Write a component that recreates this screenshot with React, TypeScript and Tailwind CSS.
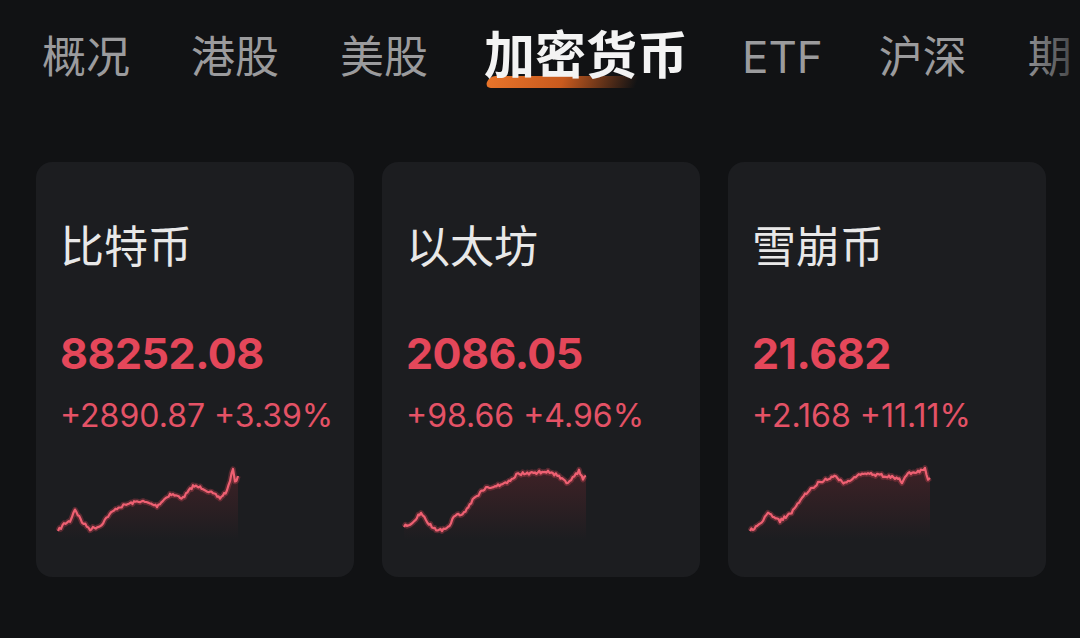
import React from "react";

const tabs = ["概况", "港股", "美股", "加密货币", "ETF", "沪深", "期"];

type Coin = {
  name: string;
  price: string;
  change: string;
  keys: [number, number][];
  seed: number;
};

const coins: Coin[] = [
  {
    name: "比特币",
    price: "88252.08",
    change: "+2890.87 +3.39%",
    seed: 7,
    keys: [
      [0, 65], [6, 58], [12, 55], [17, 43], [24, 56], [32, 63], [42, 60], [50, 50],
      [59, 42], [70, 38], [82, 35], [90, 37], [99, 40], [112, 28], [125, 32], [135, 20],
      [145, 22], [155, 28], [162, 32], [169, 25], [175, 3], [177, 17], [180, 10],
    ],
  },
  {
    name: "以太坊",
    price: "2086.05",
    change: "+98.66 +4.96%",
    seed: 13,
    keys: [
      [0, 61], [10, 55], [17, 46], [25, 58], [35, 65], [44, 62], [50, 50], [60, 47],
      [70, 32], [82, 22], [100, 18], [114, 8], [128, 7], [144, 5], [155, 10], [164, 17],
      [175, 5], [179, 13], [182, 10],
    ],
  },
  {
    name: "雪崩币",
    price: "21.682",
    change: "+2.168 +11.11%",
    seed: 29,
    keys: [
      [0, 65], [10, 58], [18, 48], [30, 55], [43, 45], [55, 28], [68, 17], [83, 10],
      [95, 17], [112, 8], [130, 9], [148, 12], [152, 17], [158, 7], [168, 6], [175, 3],
      [178, 13], [180, 12],
    ],
  },
];

function rng(seed: number) {
  let s = seed;
  return () => {
    s = (s * 16807) % 2147483647;
    return s / 2147483647;
  };
}

function buildPoints(keys: [number, number][], seed: number) {
  const r = rng(seed);
  const pts: [number, number][] = [];
  for (let i = 0; i < keys.length - 1; i++) {
    const [x0, y0] = keys[i];
    const [x1, y1] = keys[i + 1];
    const steps = Math.max(1, Math.round((x1 - x0) / 1.5));
    for (let j = 0; j < steps; j++) {
      const t = j / steps;
      const jitter = i === 0 && j === 0 ? 0 : (r() - 0.5) * 3;
      pts.push([x0 + (x1 - x0) * t, y0 + (y1 - y0) * t + jitter]);
    }
  }
  pts.push(keys[keys.length - 1]);
  return pts;
}

function Spark({ coin, id }: { coin: Coin; id: string }) {
  const pts = buildPoints(coin.keys, coin.seed).map(([x, y]) => [x + 2, y + 4] as [number, number]);
  const line = pts.map(([x, y], i) => `${i ? "L" : "M"}${x.toFixed(1)},${y.toFixed(1)}`).join(" ");
  const last = pts[pts.length - 1];
  const area = `${line} L${last[0].toFixed(1)},78 L${pts[0][0].toFixed(1)},78 Z`;
  return (
    <svg width="200" height="80" viewBox="0 0 200 80" className="block">
      <defs>
        <linearGradient id={`f-${id}`} x1="0" y1="0" x2="0" y2="1">
          <stop offset="0" stopColor="#c8333f" stopOpacity="0.2" />
          <stop offset="1" stopColor="#c8333f" stopOpacity="0" />
        </linearGradient>
      </defs>
      <path d={area} fill={`url(#f-${id})`} />
      <path d={line} fill="none" stroke="#e0485a" strokeOpacity="0.3" strokeWidth="5.5" strokeLinejoin="round" />
      <path d={line} fill="none" stroke="#ee6072" strokeWidth="2.2" strokeLinejoin="round" />
    </svg>
  );
}

export default function App() {
  return (
    <div
      className="w-[1080px] h-[638px] overflow-hidden bg-[#111214]"
      style={{ fontFamily: '"Inter", "Noto Sans CJK SC", sans-serif' }}
    >
      {/* Tabs */}
      <div className="relative h-[110px] flex items-center pl-[42px] gap-[61px] whitespace-nowrap">
        {tabs.map((t) =>
          t === "加密货币" ? (
            <div key={t} className="relative -mx-[5px]">
              <div className="absolute left-[3px] top-[46px] h-[12px] w-[150px] rounded-l-full -skew-x-[20deg] bg-gradient-to-r from-[#e8742a] via-[#c85a1e] to-transparent" />
              <span className="relative text-[51px] leading-none font-bold text-[#f3f3f3]">{t}</span>
            </div>
          ) : (
            <span
              key={t}
              className={`text-[44px] leading-none text-[#9b9b9d] pt-[3px] ${t === "ETF" ? "-mr-[5px] -ml-[2px]" : ""}`}
            >
              {t}
            </span>
          )
        )}
        <div className="absolute right-0 top-0 h-full w-[60px] bg-gradient-to-l from-[#111214]/70 to-transparent" />
      </div>

      {/* Cards */}
      <div className="flex gap-[28px] pl-[36px] mt-[52px]">
        {coins.map((c, i) => (
          <div key={c.name} className="w-[318px] h-[415px] rounded-[16px] bg-[#1c1d20] flex flex-col pl-[24px] pt-[62px]">
            <div className="text-[44px] leading-[46px] text-[#e8e8e8]">{c.name}</div>
            <div className="mt-[62px] text-[43px] leading-none font-bold text-[#e4475a] tracking-[-0.5px]">{c.price}</div>
            <div className="mt-[25px] text-[32px] leading-none text-[#e45266]">{c.change}</div>
            <div className="mt-[30px] -ml-[4px]">
              <Spark coin={c} id={`s${i}`} />
            </div>
          </div>
        ))}
      </div>
    </div>
  );
}
